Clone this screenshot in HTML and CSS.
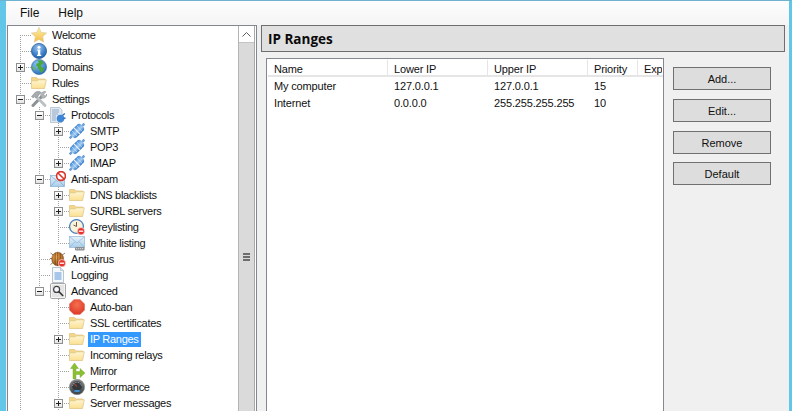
FILE: index.html
```html
<!DOCTYPE html>
<html lang="en">
<head>
<meta charset="utf-8">
<title>hMailServer Administrator</title>
<link rel="stylesheet" href="styles.css">
</head>
<body>
<svg class="sprite" aria-hidden="true">
  <defs>
    <linearGradient id="gStar" x1="0" y1="0" x2="0" y2="1"><stop offset="0" stop-color="#fff0a8"/><stop offset="1" stop-color="#f4bd45"/></linearGradient>
    <radialGradient id="gInfo" cx=".45" cy=".3" r=".8"><stop offset="0" stop-color="#9cc6ef"/><stop offset=".6" stop-color="#3a7ec8"/><stop offset="1" stop-color="#1c5298"/></radialGradient>
    <radialGradient id="gGlobe" cx=".4" cy=".3" r=".8"><stop offset="0" stop-color="#8cc8f4"/><stop offset="1" stop-color="#1f62b0"/></radialGradient>
    <linearGradient id="gFold" x1="0" y1="0" x2="0" y2="1"><stop offset="0" stop-color="#fff6d2"/><stop offset="1" stop-color="#fbdf90"/></linearGradient>
    <linearGradient id="gPlug" x1="0" y1="0" x2="1" y2="0"><stop offset="0" stop-color="#3f84d6"/><stop offset=".55" stop-color="#a6cff3"/><stop offset="1" stop-color="#3476c6"/></linearGradient>
    <linearGradient id="gEnv" x1="0" y1="0" x2="0" y2="1"><stop offset="0" stop-color="#e8f3fb"/><stop offset="1" stop-color="#a8cdea"/></linearGradient>
    <radialGradient id="gBug" cx=".4" cy=".35" r=".75"><stop offset="0" stop-color="#f0aa58"/><stop offset="1" stop-color="#8a4810"/></radialGradient>
    <radialGradient id="gStop" cx=".5" cy=".35" r=".7"><stop offset="0" stop-color="#f5704f"/><stop offset="1" stop-color="#dc3426"/></radialGradient>
    <linearGradient id="gGauge" x1="0" y1="0" x2="0" y2="1"><stop offset="0" stop-color="#888"/><stop offset="1" stop-color="#3a4046"/></linearGradient>
  </defs>
  <symbol id="i-star" viewBox="0 0 16 16"><path d="M8 .4l2.200 5 5.400.6-4 3.700 1.100 5.400L8 12.400l-4.700 2.700 1.100-5.400-4-3.700 5.400-.6z" fill="url(#gStar)" stroke="#d9c48e" stroke-width=".6"/></symbol>
  <symbol id="i-info" viewBox="0 0 16 16"><circle cx="8" cy="8" r="7.600" fill="url(#gInfo)" stroke="#24568f" stroke-width=".7"/><circle cx="8" cy="4.200" r="1.500" fill="#fff"/><path d="M6.300 6.600h3v5.200h1v1.200H6v-1.200h1V7.800h-.7z" fill="#fff"/></symbol>
  <symbol id="i-globe" viewBox="0 0 16 16"><circle cx="8" cy="8" r="7.600" fill="url(#gGlobe)" stroke="#2a6aa8" stroke-width=".6"/><path d="M7 1.500l3-.3 2.500 2-.7 2-2 .6.800 2.500 2.400.6-.7 3.200L10 14l-1-2.500-1.800-1.800-.6-2.200L5 6.600l.6-2.200L7.800 4z" fill="#4aa838"/><path d="M1.500 7l2 1 .8 2.500-1.300 1.200A7 7 0 0 1 1.500 7z" fill="#6cba4c"/></symbol>
  <symbol id="i-folder" viewBox="0 0 16 16"><path d="M.5 2.500h5l1.400 1.500h7v2.500H.5z" fill="#f5d587" stroke="#dcc07e" stroke-width=".7"/><path d="M.5 13.500V6.400l.6-.6h5.200l1-1h8l-1.800 8.700z" fill="url(#gFold)" stroke="#dcc07e" stroke-width=".7"/></symbol>
  <symbol id="i-tools" viewBox="0 0 16 16"><path d="M2 14.500l8.400-8.800" stroke="#8d9296" stroke-width="3" stroke-linecap="round"/><path d="M9.800 4.800A3.800 3.800 0 0 1 15 .8l-2.300 2.200.3 1.600 1.700.4 1.100-2a3.800 3.800 0 0 1-5 4z" fill="#b4b8bb" stroke="#85898d" stroke-width=".5"/><path d="M14 14.500L6 6.200" stroke="#bcc0c4" stroke-width="2.800" stroke-linecap="round"/><path d="M.5 5.500L4.600 1 7.800.2l2.400 1.400L8.300 3.500 6.800 5.200 5 7.200 3.500 5.800 2 6.800z" fill="#a7abae" stroke="#7c8084" stroke-width=".5"/></symbol>
  <symbol id="i-proto" viewBox="0 0 16 16"><path d="M.5.500h9l2.500 2.500v12.500H.5z" fill="#dfe9f3" stroke="#a9b7c6" stroke-width=".7"/><path d="M2 3h7M2 5h7M2 7h6M2 9h4M2 11h4M2 13h4" stroke="#93a9c4"/><circle cx="10.500" cy="11.500" r="3.800" fill="#3f86d6"/><path d="M12.500 8.500l2.300-2M13.500 11.500l2-.5" stroke="#2f6fbe" stroke-width="1.400"/></symbol>
  <symbol id="i-plug" viewBox="0 0 16 16"><g transform="rotate(45 8 8)"><path d="M6.800-2.500h2.400v3.500H6.800zM6.800 15h2.400v3.500H6.800z" fill="#6e9fd6"/><rect x="3.600" y=".6" width="8.800" height="14.800" rx="3.200" fill="url(#gPlug)"/><path d="M3.700 8h8.600" stroke="#eef6fe"/><path d="M3.800 4.500h8.400M3.800 11.500h8.400" stroke="#cfe4f8" stroke-width=".6"/></g></symbol>
  <symbol id="i-spam" viewBox="0 0 16 16"><rect x=".5" y="4.500" width="14" height="11" fill="url(#gEnv)" stroke="#87aecd" stroke-width=".7"/><path d="M.8 4.800L7.500 10.500l6.700-5.700M.8 15.200L6 9.500M14.200 15.200L9 9.500" fill="none" stroke="#7fa9cb" stroke-width=".7"/><circle cx="11" cy="5" r="4.400" fill="#fff" stroke="#d8342c" stroke-width="1.600"/><path d="M8 2l6 6" stroke="#d8342c" stroke-width="1.600"/></symbol>
  <symbol id="i-clock" viewBox="0 0 16 16"><circle cx="7.500" cy="7.500" r="6.900" fill="#fbf3d9" stroke="#4d83bd" stroke-width="1.300"/><path d="M7.500 3v4.500l-3-1.500" fill="none" stroke="#6b5a48"/><circle cx="12" cy="12.200" r="3.700" fill="#e8322c" stroke="#fff" stroke-width=".6"/><path d="M9.800 12.200h4.400" stroke="#fff" stroke-width="1.300"/></symbol>
  <symbol id="i-white" viewBox="0 0 16 16"><rect x=".5" y="1.500" width="15" height="11" fill="url(#gEnv)" stroke="#93b6d4" stroke-width=".7"/><path d="M.8 1.800L8 8l7.200-6.200M.8 12.200L6 6.800M15.200 12.200L10 6.800" fill="none" stroke="#8fb4d2" stroke-width=".7"/><rect x="6" y="12" width="9.600" height="3.400" rx="1" fill="#8c8f92"/><path d="M7 13.700h7.600" stroke="#e0e0e0" stroke-dasharray="1.200 .8"/></symbol>
  <symbol id="i-bug" viewBox="0 0 16 16"><path d="M.5 2l3.500 2.600M0 7.500h3M.5 13.500L4 10.800M15 2l-3.500 2.600" stroke="#5c4a38" stroke-width=".7"/><ellipse cx="7.700" cy="8" rx="6" ry="6.800" fill="url(#gBug)" stroke="#71400f" stroke-width=".5"/><path d="M5.200 1.800v12.400M7.700 1.200v13.600M10.200 1.800v12" stroke="#5d3208" stroke-width=".6"/><circle cx="12" cy="12.200" r="3.700" fill="#e8322c" stroke="#fff" stroke-width=".6"/><path d="M9.800 12.200h4.400" stroke="#fff" stroke-width="1.300"/></symbol>
  <symbol id="i-log" viewBox="0 0 16 16"><path d="M2.500.5h8l3 3v12h-11z" fill="#f6f9fc" stroke="#a7b4c2" stroke-width=".8"/><path d="M10.500.5v3h3" fill="#dfe8f1" stroke="#a7b4c2" stroke-width=".7"/><path d="M4.500 6h7M4.500 8h7M4.500 10h7M4.500 12h7" stroke="#5b93d2"/></symbol>
  <symbol id="i-adv" viewBox="0 0 16 16"><rect x=".5" y=".5" width="15" height="15" rx="1.400" fill="#e4e4e4" stroke="#a6a6a6"/><rect x="1.500" y="1.500" width="13" height="13" fill="none" stroke="#f4f4f4"/><circle cx="6.600" cy="6.400" r="3" fill="#f4f7fa" stroke="#404040" stroke-width="1.200"/><path d="M9 8.800l3.700 3.700" stroke="#303030" stroke-width="1.600" stroke-linecap="round"/></symbol>
  <symbol id="i-ban" viewBox="0 0 16 16"><path d="M5 .4h6L15.600 5v6L11 15.600H5L.4 11V5z" fill="url(#gStop)" stroke="#d06a5c" stroke-width=".4"/></symbol>
  <symbol id="i-mirror" viewBox="0 0 16 16"><path d="M4 16V5.500H1.500L5.500 0l4 5.500H7V8.500h4V5.500L16 10l-5 4.500V11.500H7V16z" fill="#8cc034" stroke="#6e9d20" stroke-width=".4"/></symbol>
  <symbol id="i-perf" viewBox="0 0 16 16"><circle cx="8" cy="8" r="7.700" fill="url(#gGauge)" stroke="#8a8a8a" stroke-width=".5"/><circle cx="8" cy="7" r="5" fill="#33383d"/><path d="M3.600 6.600a4.500 4.500 0 0 1 8.800 0" fill="none" stroke="#d7d7d7" stroke-dasharray="1 .8"/><path d="M8 7.500L5 4.600" stroke="#e04a38"/><rect x="5.500" y="11" width="5" height="2" fill="#3d8fd8"/></symbol>
</svg>

<div class="app">
  <nav class="menu"><span class="menu-item">File</span><span class="menu-item">Help</span></nav>
  <div class="work">
    <div class="tree">
      <div class="tree-body">
        <div class="row"><i class="g t top"></i><svg class="ic"><use href="#i-star"/></svg><span class="lb">Welcome</span></div>
        <div class="row"><i class="g t"></i><svg class="ic"><use href="#i-info"/></svg><span class="lb">Status</span></div>
        <div class="row"><i class="g t"><b class="ex plus"></b></i><svg class="ic"><use href="#i-globe"/></svg><span class="lb">Domains</span></div>
        <div class="row"><i class="g t"></i><svg class="ic"><use href="#i-folder"/></svg><span class="lb">Rules</span></div>
        <div class="row"><i class="g t"><b class="ex"></b></i><svg class="ic"><use href="#i-tools"/></svg><span class="lb">Settings</span></div>
        <div class="row"><i class="g v"></i><i class="g t"><b class="ex"></b></i><svg class="ic"><use href="#i-proto"/></svg><span class="lb">Protocols</span></div>
        <div class="row"><i class="g v"></i><i class="g v"></i><i class="g t"><b class="ex plus"></b></i><svg class="ic"><use href="#i-plug"/></svg><span class="lb">SMTP</span></div>
        <div class="row"><i class="g v"></i><i class="g v"></i><i class="g t"></i><svg class="ic"><use href="#i-plug"/></svg><span class="lb">POP3</span></div>
        <div class="row"><i class="g v"></i><i class="g v"></i><i class="g l"><b class="ex plus"></b></i><svg class="ic"><use href="#i-plug"/></svg><span class="lb">IMAP</span></div>
        <div class="row"><i class="g v"></i><i class="g t"><b class="ex"></b></i><svg class="ic"><use href="#i-spam"/></svg><span class="lb">Anti-spam</span></div>
        <div class="row"><i class="g v"></i><i class="g v"></i><i class="g t"><b class="ex plus"></b></i><svg class="ic"><use href="#i-folder"/></svg><span class="lb">DNS blacklists</span></div>
        <div class="row"><i class="g v"></i><i class="g v"></i><i class="g t"><b class="ex plus"></b></i><svg class="ic"><use href="#i-folder"/></svg><span class="lb">SURBL servers</span></div>
        <div class="row"><i class="g v"></i><i class="g v"></i><i class="g t"></i><svg class="ic"><use href="#i-clock"/></svg><span class="lb">Greylisting</span></div>
        <div class="row"><i class="g v"></i><i class="g v"></i><i class="g l"></i><svg class="ic"><use href="#i-white"/></svg><span class="lb">White listing</span></div>
        <div class="row"><i class="g v"></i><i class="g t"></i><svg class="ic"><use href="#i-bug"/></svg><span class="lb">Anti-virus</span></div>
        <div class="row"><i class="g v"></i><i class="g t"></i><svg class="ic"><use href="#i-log"/></svg><span class="lb">Logging</span></div>
        <div class="row"><i class="g v"></i><i class="g l"><b class="ex"></b></i><svg class="ic"><use href="#i-adv"/></svg><span class="lb">Advanced</span></div>
        <div class="row"><i class="g v"></i><i class="g"></i><i class="g t"></i><svg class="ic"><use href="#i-ban"/></svg><span class="lb">Auto-ban</span></div>
        <div class="row"><i class="g v"></i><i class="g"></i><i class="g t"></i><svg class="ic"><use href="#i-folder"/></svg><span class="lb">SSL certificates</span></div>
        <div class="row"><i class="g v"></i><i class="g"></i><i class="g t"><b class="ex plus"></b></i><svg class="ic"><use href="#i-folder"/></svg><span class="lb sel">IP Ranges</span></div>
        <div class="row"><i class="g v"></i><i class="g"></i><i class="g t"></i><svg class="ic"><use href="#i-folder"/></svg><span class="lb">Incoming relays</span></div>
        <div class="row"><i class="g v"></i><i class="g"></i><i class="g t"></i><svg class="ic"><use href="#i-mirror"/></svg><span class="lb">Mirror</span></div>
        <div class="row"><i class="g v"></i><i class="g"></i><i class="g t"></i><svg class="ic"><use href="#i-perf"/></svg><span class="lb">Performance</span></div>
        <div class="row"><i class="g v"></i><i class="g"></i><i class="g t"><b class="ex plus"></b></i><svg class="ic"><use href="#i-folder"/></svg><span class="lb">Server messages</span></div>
      </div>
      <div class="scroll">
        <div class="scroll-up"><svg class="chev" viewBox="0 0 9 5"><path d="M.5 4.500l4-4 4 4" fill="none" stroke="#606060"/></svg></div>
        <div class="scroll-grip"><span></span><span></span><span></span></div>
      </div>
    </div>
    <section class="panel">
      <h1 class="title">IP Ranges</h1>
      <div class="content">
        <div class="list">
          <div class="lrow head"><span>Name</span><span>Lower IP</span><span>Upper IP</span><span>Priority</span><span>Exp</span></div>
          <div class="lrow"><span>My computer</span><span>127.0.0.1</span><span>127.0.0.1</span><span>15</span><span></span></div>
          <div class="lrow"><span>Internet</span><span>0.0.0.0</span><span>255.255.255.255</span><span>10</span><span></span></div>
        </div>
        <div class="actions">
          <button class="btn" type="button">Add...</button>
          <button class="btn" type="button">Edit...</button>
          <button class="btn" type="button">Remove</button>
          <button class="btn tight" type="button">Default</button>
        </div>
      </div>
    </section>
  </div>
</div>
</body>
</html>
```
FILE: styles.css
```css
* { box-sizing: border-box; }
html, body { margin: 0; height: 411px; overflow: hidden; }
body {
  background: #62c6e9;
  padding: 1px 3px 0 6px;
  font: 11px/16px "Liberation Sans", Arial, sans-serif;
  color: #101010;
  position: relative;
}
body::before { content: ""; display: block; height: 1px; margin: -1px -3px 0 -6px; background: #6fb2d0; }
.sprite { display: block; width: 0; height: 0; }
.app { height: 410px; background: #f0f0f0; display: flex; flex-direction: column; overflow: hidden; }

.menu { height: 24px; flex: none; display: flex; align-items: center; padding-left: 7px; background: linear-gradient(#fdfdfd, #f5f5f5); font-size: 12px; }
.menu-item { padding: 0 7px; margin-right: 5px; }

.work { flex: 1; min-height: 0; display: flex; padding-left: 1px; padding-right: 4px; }

.tree { width: 250px; height: 400px; flex: none; border: 1px solid #828790; background: #fff; display: flex; }
.tree-body { flex: 1; min-width: 0; padding: 1px 0 0 4px; }
.row { height: 16px; display: flex; white-space: nowrap; }
.g { display: block; flex: none; width: 19px; height: 16px; position: relative; }
.g.v, .g.t { background: linear-gradient(#a2a2a2 50%, transparent 50%) 8px 0 / 1px 2px repeat-y; }
.g.t::after, .g.l::after { content: ""; display: block; margin: 8px 0 0 8px; width: 11px; height: 1px; background: linear-gradient(90deg, #a2a2a2 50%, transparent 50%) 0 0 / 2px 1px repeat-x; }
.g.l::before { content: ""; display: block; margin-left: 8px; width: 1px; height: 8px; background: linear-gradient(#a2a2a2 50%, transparent 50%) 0 0 / 1px 2px repeat-y; }
.g.l::after { margin-top: 0; }
.g.top { background-clip: content-box; padding-top: 8px; }
.g.top::after { margin-top: 0; }
.ex { position: absolute; left: 4px; top: 4px; width: 9px; height: 9px; border: 1px solid #8e8f8f; background: linear-gradient(#fff, #e4e4e4); }
.ex::before { content: ""; position: absolute; left: 1px; top: 3px; width: 5px; height: 1px; background: #202020; }
.ex.plus::after { content: ""; position: absolute; left: 3px; top: 1px; width: 1px; height: 5px; background: #202020; }
.ic { width: 16px; height: 16px; flex: none; display: block; }
.lb { margin-left: 3px; padding: 0 2px; height: 15px; line-height: 16px; letter-spacing: -.3px; }
.lb.sel { background: #3399ff; color: #fff; margin-top: 1px; line-height: 14px; padding-right: 3px; }

.scroll { width: 17px; margin-right: 1px; flex: none; background: #dadada; border-left: 1px solid #b4b4b4; border-right: 1px solid #a8a8a8; }
.scroll-up { height: 17px; background: #fff; display: flex; align-items: center; justify-content: center; border-bottom: 1px solid #c4c4c4; }
.chev { width: 9px; height: 5px; display: block; }
.scroll-grip { margin: 210px auto 0; width: 7px; display: flex; flex-direction: column; gap: 1px; }
.scroll-grip span { display: block; height: 2px; background: #6d6d6d; }

.panel { flex: 1; min-width: 0; margin-left: 4px; display: flex; flex-direction: column; }
.title { margin: 0; height: 27px; flex: none; background: #e0e0e0; border: 1px solid #6e6e6e; padding-left: 6px; font: 700 13.5px/27px "Open Sans", sans-serif; color: #0a0a0a; }
.content { flex: 1; display: flex; min-height: 0; padding: 6px 0 0 5px; }
.list { width: 398px; height: 400px; flex: none; border: 1px solid #828790; padding: 1px 0 0 1px; background: #fff; overflow: hidden; letter-spacing: -.15px; }
.lrow { display: grid; grid-template-columns: 120px 100px 100px 50px 24px; height: 17px; line-height: 17px; }
.lrow span { padding-left: 6px; overflow: hidden; white-space: nowrap; }
.head { height: 17px; border-bottom: 2px solid #e5e5e5; line-height: 18px; margin-bottom: 1px; }
.head span { border-right: 1px solid #e5e5e5; }
.head span:last-child { border-right: 0; }
.actions { display: flex; flex-direction: column; align-items: flex-start; padding: 9px 0 0 9px; }
.btn { width: 98px; height: 23px; flex: none; margin: 0 0 9px; padding: 0; background: #dddddd; border: 1px solid #707070; border-radius: 0; font: inherit; color: #101010; }
.btn:nth-child(3) { margin-bottom: 8px; }
```
